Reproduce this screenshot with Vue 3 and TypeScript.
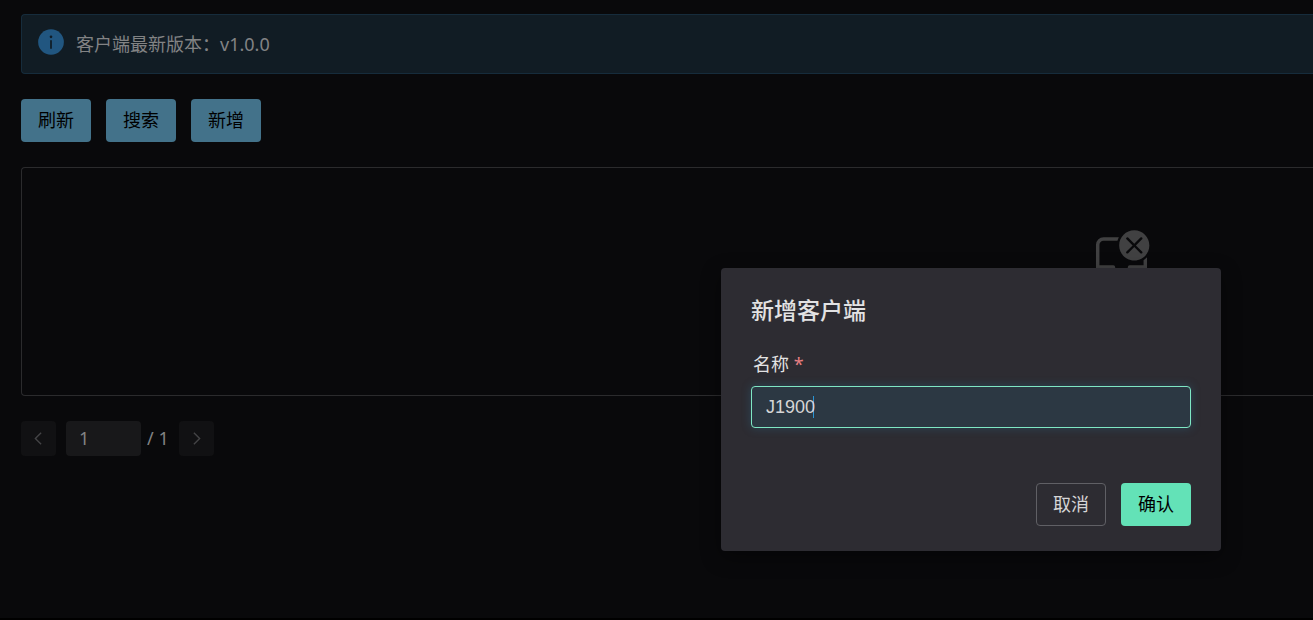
<script setup lang="ts">
import { onMounted, ref } from 'vue'

const actions: string[] = ['刷新', '搜索', '新增']
const version = 'v1.0.0'
const page = ref(1)
const pageCount = 1
const clientName = ref('J1900')
const nameInput = ref<HTMLInputElement | null>(null)

onMounted(() => nameInput.value?.focus())
</script>

<template>
  <div class="page">
    <main class="content">
      <div class="alert" role="status">
        <svg class="alert-icon" viewBox="0 0 28 28" aria-hidden="true">
          <circle cx="14" cy="14" r="12" fill="#215680" />
          <circle cx="14" cy="9.2" r="1.25" fill="#101c24" />
          <rect x="13.2" y="12.1" width="1.6" height="8.4" rx="0.8" fill="#101c24" />
        </svg>
        <span>客户端最新版本：{{ version }}</span>
      </div>

      <div class="toolbar">
        <button v-for="label in actions" :key="label" type="button" class="btn info">{{ label }}</button>
      </div>

      <section class="panel">
        <svg class="empty-icon" viewBox="0 0 28 28" fill="currentColor" aria-hidden="true">
          <path
            fill-rule="evenodd"
            d="M26 7.5C26 11.09 23.09 14 19.5 14S13 11.09 13 7.5 15.91 1 19.5 1 26 3.91 26 7.5ZM16.854 4.146a.5.5 0 0 0-.708.708L18.793 7.5l-2.647 2.646a.5.5 0 0 0 .708.708L19.5 8.207l2.646 2.647a.5.5 0 0 0 .708-.708L20.207 7.5l2.647-2.646a.5.5 0 0 0-.708-.708L19.5 6.793Z"
          />
          <path
            fill-rule="evenodd"
            d="M25 22.75V12.6a7.5 7.5 0 0 1-1.5 1.245V16h-6a.75.75 0 0 0-.75.75 2.75 2.75 0 0 1-5.5 0A.75.75 0 0 0 10.5 16h-6V7.25c0-.966.784-1.75 1.75-1.75h6.02c.145-.525.345-1.028.595-1.5H6.25A3.25 3.25 0 0 0 3 7.25v15.5A3.25 3.25 0 0 0 6.25 26h15.5A3.25 3.25 0 0 0 25 22.75ZM4.5 17.5h5.316a4.25 4.25 0 0 0 8.368 0H23.5v5.25a1.75 1.75 0 0 1-1.75 1.75H6.25a1.75 1.75 0 0 1-1.75-1.75Z"
          />
        </svg>
      </section>

      <nav class="pager" aria-label="分页">
        <button type="button" class="step" disabled aria-label="上一页">
          <svg viewBox="0 0 20 20" aria-hidden="true"><path d="M12.5 4.5 7 10l5.5 5.5" /></svg>
        </button>
        <input v-model="page" class="page-input" type="text" aria-label="页码" />
        <span class="total">/ {{ pageCount }}</span>
        <button type="button" class="step" disabled aria-label="下一页">
          <svg viewBox="0 0 20 20" aria-hidden="true"><path d="M7.5 4.5 13 10l-5.5 5.5" /></svg>
        </button>
      </nav>
    </main>

    <form class="dialog" role="dialog" aria-labelledby="dialog-title" @submit.prevent>
      <h2 id="dialog-title">新增客户端</h2>
      <label for="client-name">名称 <span class="required">*</span></label>
      <input id="client-name" ref="nameInput" v-model="clientName" class="name-input" type="text" />
      <div class="dialog-actions">
        <button type="button" class="btn cancel">取消</button>
        <button type="submit" class="btn confirm">确认</button>
      </div>
    </form>
  </div>
</template>

<style>
body {
  margin: 0;
  background: #09090b;
}
</style>

<style scoped>
.page {
  position: relative;
  box-sizing: border-box;
  min-height: 100vh;
  padding: 14px 0 0 21px;
  overflow: hidden;
  border-bottom: 2px solid #000;
  background: #09090b;
  color: #828384;
  font: 18px/28px "Noto Sans", "Noto Sans CJK SC", sans-serif;
}

.page * {
  box-sizing: border-box;
}

button,
input {
  margin: 0;
  font: inherit;
}

.content {
  display: flex;
  flex-direction: column;
  gap: 25px;
}

.alert {
  display: flex;
  gap: 10px;
  padding: 15px 14px;
  border: 1px solid #162c3c;
  border-right: 0;
  border-radius: 4px 0 0 4px;
  background: #111c24;
}

.alert-icon {
  width: 30px;
  height: 30px;
  margin: -3px 0 0;
}

.toolbar {
  display: flex;
  gap: 15px;
}

.btn {
  min-width: 70px;
  height: 43px;
  padding: 0 16px 2px;
  border: 1px solid transparent;
  border-radius: 4px;
}

.info {
  background: #43728a;
  color: #000;
}

.panel {
  display: flex;
  justify-content: flex-end;
  min-height: 229px;
  padding: 60px 159px 0 0;
  border: 1px solid #2b2b2d;
  border-right: 0;
  border-radius: 4px 0 0 4px;
}

.empty-icon {
  width: 65px;
  height: 65px;
  color: #414142;
}

.pager {
  display: flex;
  align-items: center;
}

.step {
  display: grid;
  place-items: center;
  width: 35px;
  height: 35px;
  padding: 0;
  border: 0;
  border-radius: 4px;
  background: #111113;
}

.step svg {
  width: 21px;
  height: 21px;
  fill: none;
  stroke: #444446;
  stroke-width: 1.3;
}

.page-input {
  width: 75px;
  height: 35px;
  margin-left: 10px;
  padding: 0 13px 2px;
  border: 0;
  border-radius: 4px;
  background: #18181a;
  color: #828384;
}

.total {
  padding: 0 10px 2px 6px;
}

.dialog {
  position: absolute;
  top: 268px;
  right: 92px;
  width: 500px;
  padding: 25px 30px;
  border-radius: 4px;
  background: #2d2c32;
  box-shadow: 0 6px 20px rgba(0, 0, 0, 0.4);
}

h2 {
  margin: 0;
  color: #e2e2e3;
  font-size: 23px;
  font-weight: 500;
  line-height: 34px;
}

label {
  display: block;
  margin-top: 23px;
  padding: 0 2px 8px;
  color: #e2e2e3;
}

.required {
  color: #e77f82;
}

.name-input {
  display: block;
  width: 100%;
  height: 42px;
  padding: 0 14px;
  border: 1px solid #7fe7c4;
  border-radius: 4px;
  outline: 0;
  background: #2c3843 linear-gradient(#2a94d4, #2a94d4) 61px center / 1px 22px no-repeat;
  box-shadow: 0 0 10px rgba(42, 120, 160, 0.35);
  caret-color: transparent;
  color: #d5d5d6;
  font-family: "Liberation Sans", "Noto Sans CJK SC", sans-serif;
}

.dialog-actions {
  display: flex;
  justify-content: flex-end;
  gap: 15px;
  margin-top: 55px;
}

.cancel {
  border-color: #606065;
  background: transparent;
  color: #d5d5d6;
}

.confirm {
  background: #63e2b7;
  color: #000;
}
</style>
